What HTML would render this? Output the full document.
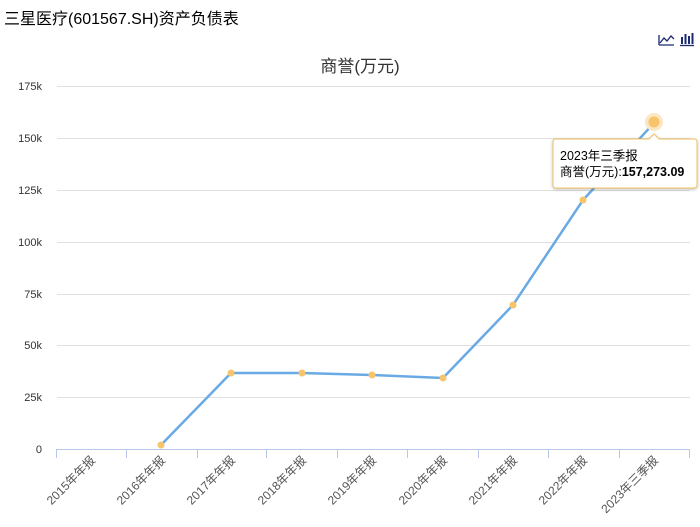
<!DOCTYPE html>
<html><head><meta charset="utf-8"><style>
body{margin:0;background:#fff;width:700px;height:527px;overflow:hidden;font-family:"Liberation Sans","Noto Sans CJK SC",sans-serif}
</style></head><body>
<svg width="700" height="527" xmlns="http://www.w3.org/2000/svg" style="position:absolute;left:0;top:0;font-family:'Liberation Sans','Noto Sans CJK SC',sans-serif">
<defs><filter id="sh" x="-10%" y="-20%" width="120%" height="140%"><feDropShadow dx="0" dy="1" stdDeviation="1.5" flood-color="#000" flood-opacity="0.25"/></filter></defs>
<text x="4" y="24" font-size="16" fill="#000">三星医疗(601567.SH)资产负债表</text>
<text x="360" y="72" font-size="17" fill="#333" text-anchor="middle">商誉(万元)</text>
<g stroke="#1a2a70" fill="none">
<path d="M659 45 V35 M659 45 H674 M660 43 L664 38 L667 41 L671 36 L674 39" stroke-width="1.3"/>
<path d="M680 45.5 H694" stroke-width="1.3"/>
<path d="M682 44 V37 M685.5 44 V34 M689 44 V36 M692.5 44 V33" stroke-width="2"/>
</g>
<g stroke="#e0e0e0" stroke-width="1">
<line x1="57" y1="86.5" x2="690" y2="86.5"/>
<line x1="57" y1="138.5" x2="690" y2="138.5"/>
<line x1="57" y1="190.5" x2="690" y2="190.5"/>
<line x1="57" y1="242.5" x2="690" y2="242.5"/>
<line x1="57" y1="294.5" x2="690" y2="294.5"/>
<line x1="57" y1="345.5" x2="690" y2="345.5"/>
<line x1="57" y1="397.5" x2="690" y2="397.5"/>
</g>
<g font-size="11" fill="#333" text-anchor="end">
<text x="42" y="90">175k</text><text x="42" y="142">150k</text><text x="42" y="194">125k</text>
<text x="42" y="246">100k</text><text x="42" y="298">75k</text><text x="42" y="349">50k</text>
<text x="42" y="401">25k</text><text x="42" y="453">0</text>
</g>
<g stroke="#b8c8e8" stroke-width="1">
<line x1="56" y1="449.5" x2="690" y2="449.5"/>
<path d="M56.5 450V458M126.5 450V458M197.5 450V458M266.5 450V458M337.5 450V458M407.5 450V458M478.5 450V458M548.5 450V458M619.5 450V458M689.5 450V458"/>
</g>
<g font-size="12" fill="#555" text-anchor="end">
<text transform="translate(96,461) rotate(-45)">2015年年报</text>
<text transform="translate(166,461) rotate(-45)">2016年年报</text>
<text transform="translate(236,461) rotate(-45)">2017年年报</text>
<text transform="translate(307,461) rotate(-45)">2018年年报</text>
<text transform="translate(377,461) rotate(-45)">2019年年报</text>
<text transform="translate(448,461) rotate(-45)">2020年年报</text>
<text transform="translate(518,461) rotate(-45)">2021年年报</text>
<text transform="translate(588,461) rotate(-45)">2022年年报</text>
<text transform="translate(659,461) rotate(-45)">2023年三季报</text>
</g>
<polyline fill="none" stroke="#6aaae4" stroke-width="2.5" points="161,445 231,373 302,373 372,375 443,378 513,305 583,200 654,123"/>
<g fill="#f7c36b">
<circle cx="161" cy="445" r="3.5"/><circle cx="231" cy="373" r="3.5"/><circle cx="302" cy="373" r="3.5"/>
<circle cx="372" cy="375" r="3.5"/><circle cx="443" cy="378" r="3.5"/><circle cx="513" cy="305" r="3.5"/>
<circle cx="583" cy="200" r="3.5"/>
<circle cx="654" cy="122" r="9" fill="#fbe7c4"/><circle cx="654" cy="122" r="5.5"/>
</g>
<path d="M556 139 H649 L654 134 L659 139 H694 Q697 139 697 142 V185 Q697 188 694 188 H556 Q553 188 553 185 V142 Q553 139 556 139 Z" fill="#fff" stroke="#f0c060" stroke-width="1" filter="url(#sh)"/>
<text x="560" y="160" font-size="12.5" fill="#000">2023年三季报</text>
<text x="560" y="176" font-size="12.5" fill="#000">商誉(万元):<tspan font-weight="bold">157,273.09</tspan></text>
</svg>
</body></html>
